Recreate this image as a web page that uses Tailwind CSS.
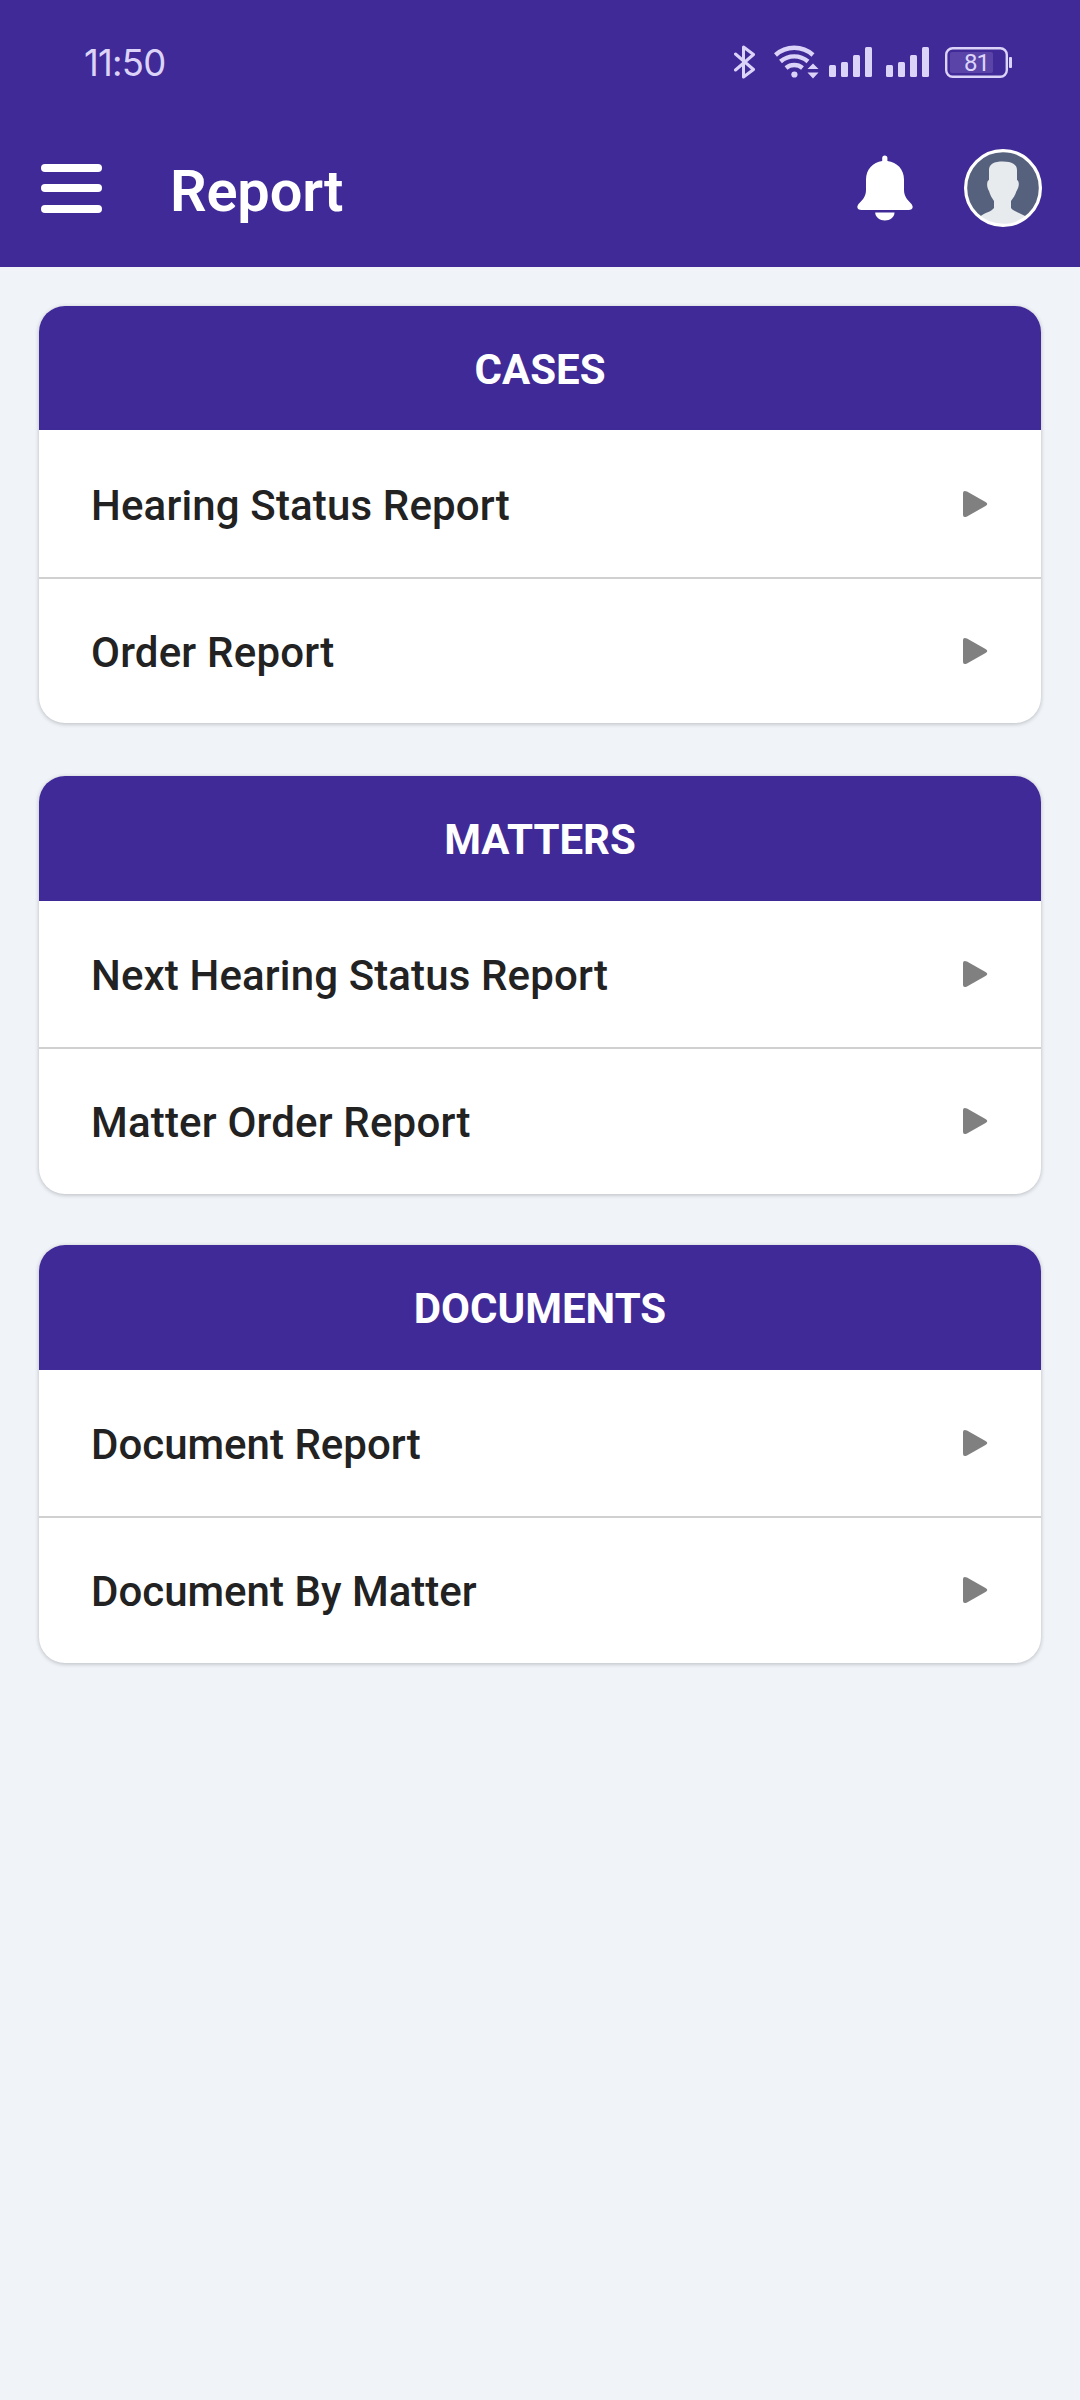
<!DOCTYPE html>
<html lang="en">
<head>
<meta charset="utf-8">
<title>Report</title>
<script src="https://cdn.jsdelivr.net/npm/@tailwindcss/browser@4"></script>
</head>
<body class="min-h-[2400px] w-[1080px] bg-[#f0f4f9] font-[Roboto,sans-serif] text-[#222222]">
<header class="h-[267px] bg-[#402a97] text-white">
  <!-- Status bar -->
  <div class="flex h-[124px] items-center pl-[84px] pr-[68px] text-[#dcd4f8]">
    <span class="flex pt-0.5 font-[Inter,sans-serif] text-[36.5px] leading-none"><span class="tracking-[-0.8px]">11:</span><span class="tracking-[-0.8px]">50</span></span>
    <div class="ml-auto flex items-center">
      <svg class="mr-[18px] h-9 w-[22px]" viewBox="0 0 22 36" fill="none" stroke="currentColor" stroke-width="3" stroke-linejoin="round" stroke-linecap="round"><path d="M1.500 10 19.500 25.500 9.500 33V3L19.500 10.500 1.500 26"/></svg>
      <svg class="mr-[10px] h-9 w-[45px]" viewBox="0 0 45 36" fill="none" stroke="currentColor" stroke-width="4.400"><path d="M1.500 11a28 28 0 0 1 37.500 0M6.500 17.500a21 21 0 0 1 27.500 0M12 24a13 13 0 0 1 16.500 0"/><circle cx="20.400" cy="30.500" r="3.100" fill="currentColor" stroke="none"/><path d="M33.500 25 39 19.500 44.500 25zM33.500 28.500 39 34.500 44.500 28.500z" fill="currentColor" stroke="none"/></svg>
      <svg class="mr-[14px] h-9 w-[43px]" viewBox="0 0 43 36" fill="currentColor"><rect y="21" width="7" height="12" rx="1.500"/><rect x="12" y="18" width="7" height="15" rx="1.500"/><rect x="24" y="11" width="7" height="22" rx="1.500"/><rect x="36" y="3" width="7" height="30" rx="1.500"/></svg>
      <svg class="mr-[16px] h-9 w-[43px]" viewBox="0 0 43 36" fill="currentColor"><rect y="21" width="7" height="12" rx="1.500"/><rect x="12" y="18" width="7" height="15" rx="1.500"/><rect x="24" y="11" width="7" height="22" rx="1.500"/><rect x="36" y="3" width="7" height="30" rx="1.500"/></svg>
      <svg class="h-9 w-[67px]" viewBox="0 0 67 36"><rect x="1.200" y="4.200" width="60.600" height="28.600" rx="6.500" fill="none" stroke="currentColor" stroke-width="2.400"/><rect x="5" y="8" width="43" height="21" rx="2" fill="#5a44a8"/><rect x="64" y="13" width="3" height="11" rx="1" fill="currentColor"/><text x="19" y="27" font-family="Roboto, sans-serif" font-size="24" letter-spacing="-1" fill="currentColor">81</text></svg>
    </div>
  </div>
  <!-- App bar -->
  <div class="flex h-[128px] items-center pl-[41px] pr-[38px]">
    <div class="flex w-[61px] flex-col gap-[12.500px]">
      <div class="h-2 rounded-full bg-white"></div>
      <div class="h-2 rounded-full bg-white"></div>
      <div class="h-2 rounded-full bg-white"></div>
    </div>
    <h1 class="ml-[68px] pt-[7px] text-[57.750px] leading-none font-semibold tracking-[-0.2px]">Report</h1>
    <svg class="ml-auto h-[66px] w-[56px]" viewBox="0 0 56 66" fill="white"><path d="M25.200 6V3a2.600 2.600 0 0 1 5.200 0V6C40 7 47 14.500 47 24.500V35c0 6 3.500 10 6.500 13 4 4 2 7-2 7H4.500c-4 0-6-3-2-7 3-3 6.500-7 6.500-13V24.500C9 14.500 16 7 25.200 6z"/><path d="M18.200 57.500H37.500c0 4.500-4.500 8-9.600 8s-9.700-3.500-9.700-8z"/></svg>
    <svg class="ml-[51px] h-[78px] w-[78px]" viewBox="0 0 78 78"><circle cx="39" cy="39" r="37.500" fill="#56617d"/><clipPath id="face"><circle cx="39" cy="39" r="37"/></clipPath><path clip-path="url(#face)" fill="#e7ebee" d="M25 31V21c0-6 5-8.500 14-8.500s14 3 14 8.500v10c2.500 1 2.500 7-.5 11-1 4-3.500 7-5.500 10v7c3 4 10 5 15 8.500V78H16V67.500c5-4 11-4.500 14-8.500v-7c-2-3-4-6-5-10-2.500-4-2.500-10 0-11z"/><circle cx="39" cy="39" r="37.400" fill="none" stroke="white" stroke-width="3.200"/></svg>
  </div>
</header>

<main class="px-[39px] pt-[39px]">
  <section class="overflow-hidden rounded-[26px] bg-white shadow-[0_1px_4px_rgba(0,0,0,0.24)]">
    <h2 class="flex h-[124px] items-center justify-center bg-[#402a97] pt-1 text-[42px] leading-none font-bold text-white">CASES</h2>
    <a class="flex h-[149px] items-center justify-between border-b-2 border-[#d0d0d0] pr-[51px] pl-[52px] text-[42px] leading-none font-medium"><span class="pt-1 tracking-[0.15px]">Hearing Status Report</span><svg class="h-[26px] w-[27px]" viewBox="0 0 27 26" fill="#808080"><path d="M0 2Q0-1 4 .5L22.500 11Q26 13 22.500 15L4 25.500Q0 27 0 24z"/></svg></a>
    <a class="flex h-[144px] items-center justify-between pr-[51px] pl-[52px] text-[42px] leading-none font-medium"><span class="pt-1 tracking-[0.200px]">Order Report</span><svg class="h-[26px] w-[27px]" viewBox="0 0 27 26" fill="#808080"><path d="M0 2Q0-1 4 .5L22.500 11Q26 13 22.500 15L4 25.500Q0 27 0 24z"/></svg></a>
  </section>

  <section class="mt-[53px] overflow-hidden rounded-[26px] bg-white shadow-[0_1px_4px_rgba(0,0,0,0.24)]">
    <h2 class="flex h-[125px] items-center justify-center bg-[#402a97] pt-0.5 text-[42px] leading-none font-bold text-white">MATTERS</h2>
    <a class="flex h-[148px] items-center justify-between border-b-2 border-[#d0d0d0] pr-[51px] pl-[52px] text-[42px] leading-none font-medium"><span class="pt-1 tracking-[0.130px]">Next Hearing Status Report</span><svg class="h-[26px] w-[27px]" viewBox="0 0 27 26" fill="#808080"><path d="M0 2Q0-1 4 .5L22.500 11Q26 13 22.500 15L4 25.500Q0 27 0 24z"/></svg></a>
    <a class="flex h-[145px] items-center justify-between pr-[51px] pb-px pl-[52px] text-[42px] leading-none font-medium"><span class="pt-[3px] tracking-[0.180px]">Matter Order Report</span><svg class="h-[26px] w-[27px]" viewBox="0 0 27 26" fill="#808080"><path d="M0 2Q0-1 4 .5L22.500 11Q26 13 22.500 15L4 25.500Q0 27 0 24z"/></svg></a>
  </section>

  <section class="mt-[51px] overflow-hidden rounded-[26px] bg-white shadow-[0_1px_4px_rgba(0,0,0,0.24)]">
    <h2 class="flex h-[125px] items-center justify-center bg-[#402a97] pt-0.5 text-[42px] leading-none font-bold text-white">DOCUMENTS</h2>
    <a class="flex h-[148px] items-center justify-between border-b-2 border-[#d0d0d0] pr-[51px] pl-[52px] text-[42px] leading-none font-medium"><span class="pt-1">Document Report</span><svg class="h-[26px] w-[27px]" viewBox="0 0 27 26" fill="#808080"><path d="M0 2Q0-1 4 .5L22.500 11Q26 13 22.500 15L4 25.500Q0 27 0 24z"/></svg></a>
    <a class="flex h-[145px] items-center justify-between pr-[51px] pb-px pl-[52px] text-[42px] leading-none font-medium"><span class="pt-[3px]">Document By Matter</span><svg class="h-[26px] w-[27px]" viewBox="0 0 27 26" fill="#808080"><path d="M0 2Q0-1 4 .5L22.500 11Q26 13 22.500 15L4 25.500Q0 27 0 24z"/></svg></a>
  </section>
</main>
</body>
</html>
